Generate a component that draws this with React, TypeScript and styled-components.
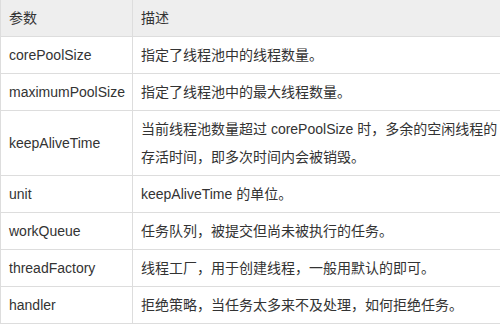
import React, {FC} from 'react';
import styled, {createGlobalStyle} from 'styled-components';

const GlobalStyle = createGlobalStyle`
  body {
    margin: 0;
    background: #fff;
    overflow: hidden;
  }
`;

const Page = styled.div`
  width: 500px;
  height: 326px;
  overflow: hidden;
`;

const Table = styled.table`
  width: 510px;
  border-collapse: collapse;
  table-layout: fixed;
  font-family: "Liberation Sans", Arial, "Noto Sans CJK SC", sans-serif;
  font-size: 14px;
  color: #333;
`;

const HeadRow = styled.tr`
  background: #eeeeee;
`;

const HeadCell = styled.th<{ $w?: number }>`
  width: ${p => (p.$w ? `${p.$w}px` : 'auto')};
  height: 36px;
  padding: 0 8px;
  box-sizing: border-box;
  text-align: left;
  font-weight: normal;
  line-height: 28px;
  border-left: 1px solid #dddddd;
  border-right: 1px solid #dddddd;
  border-bottom: 1px solid #dddddd;
`;

const Cell = styled.td<{ $name?: boolean }>`
  padding: 4px ${p => (p.$name ? '6px 4px 8px' : '8px')};
  line-height: 28px;
  vertical-align: middle;
  border: 1px solid #dddddd;
  white-space: ${p => (p.$name ? 'nowrap' : 'normal')};
  word-break: ${p => (p.$name ? 'normal' : 'break-all')};
`;

type Param = {
    name: string;
    desc: string;
};

const params: Param[] = [
    {name: 'corePoolSize', desc: '指定了线程池中的线程数量。'},
    {name: 'maximumPoolSize', desc: '指定了线程池中的最大线程数量。'},
    {name: 'keepAliveTime', desc: '当前线程池数量超过 corePoolSize 时，多余的空闲线程的存活时间，即多次时间内会被销毁。'},
    {name: 'unit', desc: 'keepAliveTime 的单位。'},
    {name: 'workQueue', desc: '任务队列，被提交但尚未被执行的任务。'},
    {name: 'threadFactory', desc: '线程工厂，用于创建线程，一般用默认的即可。'},
    {name: 'handler', desc: '拒绝策略，当任务太多来不及处理，如何拒绝任务。'},
];

const App: FC = () => {
    return (
        <Page>
            <GlobalStyle/>
            <Table>
                <thead>
                <HeadRow>
                    <HeadCell $w={132}>参数</HeadCell>
                    <HeadCell>描述</HeadCell>
                </HeadRow>
                </thead>
                <tbody>
                {params.map(p => (
                    <tr key={p.name}>
                        <Cell $name>{p.name}</Cell>
                        <Cell>{p.desc}</Cell>
                    </tr>
                ))}
                </tbody>
            </Table>
        </Page>
    );
};

export default App;
